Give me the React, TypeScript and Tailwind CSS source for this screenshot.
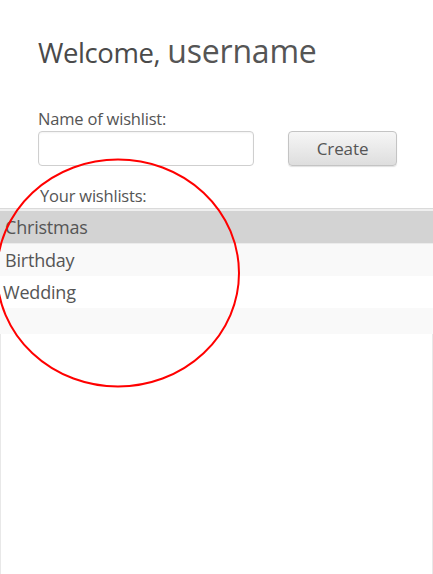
import React from "react";

export default function App() {
  const rows = [
    { label: "Christmas", bg: "bg-[#d3d3d3]", h: "h-[32px]", pl: "pl-[5px]" },
    { label: "Birthday", bg: "bg-[#f9f9f9]", h: "h-[33px]", pl: "pl-[5px]" },
    { label: "Wedding", bg: "bg-white", h: "h-[32px]", pl: "pl-[3px]" },
    { label: "", bg: "bg-[#f9f9f9]", h: "h-[26px]", pl: "pl-[5px]" },
  ];
  return (
    <div className="relative w-[433px] h-[574px] overflow-hidden bg-white flex flex-col font-['Open_Sans',sans-serif] text-[#555]">
      <div className="pl-[38px] pt-[35px]">
        <h1 className="flex items-baseline leading-none h-[34px]">
          <span className="text-[27.5px] text-[#4a4a4a] tracking-[-0.4px]">Welcome,</span>
          <span className="ml-[7px] text-[32px] text-[#555] tracking-[-0.2px]">username</span>
        </h1>
        <div className="mt-[40px] text-[16.5px] leading-[20px] text-[#555] tracking-[-0.2px]">Name of wishlist:</div>
        <div className="mt-[2px] flex gap-[34px]">
          <input
            className="w-[216px] h-[35px] rounded-[4px] border border-[#cfcfcf] bg-white outline-none shadow-[inset_0_1px_2px_rgba(0,0,0,0.05)]"
            aria-label="Name of wishlist"
          />
          <button className="w-[109px] h-[35px] rounded-[4px] border border-[#c4c4c4] bg-gradient-to-b from-[#f6f6f6] to-[#dedede] shadow-[0_1px_1px_rgba(0,0,0,0.12)] text-[17px] text-[#555] tracking-[-0.1px]">
            Create
          </button>
        </div>
        <div className="mt-[20px] pl-[2px] text-[16.5px] leading-[20px] text-[#555] tracking-[-0.2px]">Your wishlists:</div>
      </div>
      <div className="mt-[2px] h-[1px] bg-[#dadada]" />
      <div className="h-[2px] bg-[#efefef]" />
      {rows.map((r, i) => (
        <div key={i} className={`${r.bg} ${r.h} ${r.pl} flex items-center text-[18px] text-[#555] tracking-[-0.2px] ${i === 1 ? "border-t border-[#ececec]" : ""}`}>
          {r.label}
        </div>
      ))}
      <div className="flex-1 border-l border-r border-[#e8e8e8] bg-white" />
      <svg className="absolute left-0 top-0 pointer-events-none" width="433" height="574">
        <ellipse cx="118" cy="273" rx="121" ry="113.5" fill="none" stroke="#ff0000" strokeWidth="2" />
      </svg>
    </div>
  );
}
